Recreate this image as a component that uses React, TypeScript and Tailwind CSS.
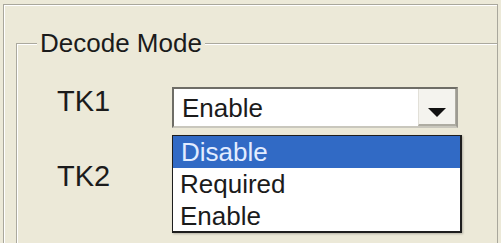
import React from "react";

function Arrow() {
  return (
    <svg width="18" height="9" viewBox="0 0 18 9" className="block">
      <polygon points="0,0 18,0 9,9" fill="#111" />
    </svg>
  );
}

function Combo({ value, children }: { value: string; children?: React.ReactNode }) {
  return (
    <div className="relative w-[286px] h-[41px]">
      <div className="w-full h-full flex border-2 border-t-[#6e6d66] border-l-[#6e6d66] border-r-[#9d9b92] border-b-[#c9c7bd] bg-white">
        <span className="flex-1 pl-[8px] pt-[4px] text-[26px] leading-[30px] text-[#1b1b1b]">{value}</span>
        <div className="w-[38px] h-full flex justify-center pt-[19px] bg-[#f4f3ee] border-l border-l-[#e2e0d8] border-b-2 border-b-[#aeaca2] border-r border-r-[#aeaca2]">
          <Arrow />
        </div>
      </div>
      {children}
    </div>
  );
}

export default function App() {
  return (
    <div className="relative w-[501px] h-[243px] overflow-hidden bg-[#ece9d8] pt-[4px] px-[3px] font-['Liberation_Sans',Arial,sans-serif]">
      <div className="h-full overflow-hidden border-t border-l border-r border-[#a9a79c] shadow-[inset_1px_1px_0_#ffffff] pl-[12px] pt-[23px]">
        <fieldset className="m-0 p-0 w-[540px] h-[260px] border border-[#aba99e] shadow-[inset_1px_1px_0_#ffffff]">
          <legend className="ml-[20px] px-[3px] bg-[#ece9d8] text-[26px] leading-[30px] text-[#1b1b1b]">
            Decode Mode
          </legend>
          <div className="flex items-start mt-[29px] pl-[40px]">
            <span className="w-[115px] mt-[-1px] text-[29px] leading-[30px] text-[#1b1b1b]">TK1</span>
            <Combo value="Enable">
              <div className="absolute z-10 left-0 top-[48px] w-[290px] h-[98px] flex flex-col bg-white border border-[#1e1e1e] border-r-2 border-b-2 shadow-[1px_1px_2px_rgba(0,0,0,0.25)]">
                <div className="h-[32px] pl-[8px] bg-[#316ac5] text-[#e2ecff] text-[26px] leading-[32px]">Disable</div>
                <div className="h-[32px] pl-[7px] text-[#1b1b1b] text-[26px] leading-[32px]">Required</div>
                <div className="h-[32px] pl-[7px] text-[#1b1b1b] text-[26px] leading-[32px]">Enable</div>
              </div>
            </Combo>
          </div>
          <div className="flex items-start mt-[33px] pl-[40px]">
            <span className="w-[115px] text-[29px] leading-[30px] text-[#1b1b1b]">TK2</span>
          </div>
        </fieldset>
      </div>
    </div>
  );
}
